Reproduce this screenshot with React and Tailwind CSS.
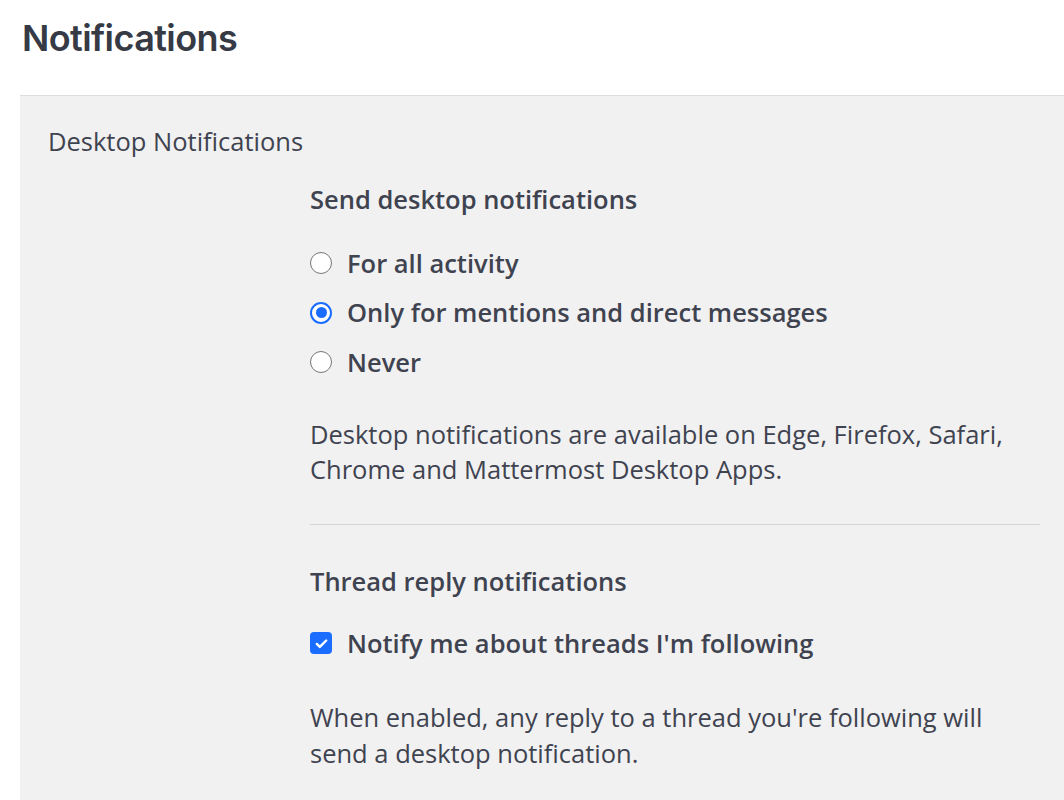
import React, { useState } from "react";

const Radio = ({ checked, label, onSelect }) => (
  <label className="flex items-center h-[36px] cursor-pointer" onClick={onSelect}>
    {checked ? (
      <span className="flex items-center justify-center w-[22px] h-[22px] rounded-full border-[2px] border-[#1a6dff] bg-white">
        <span className="w-[11px] h-[11px] rounded-full bg-[#1a6dff]" />
      </span>
    ) : (
      <span className="w-[22px] h-[22px] rounded-full border-[1.5px] border-[#767676] bg-white" />
    )}
    <span className="ml-[15px] font-semibold">{label}</span>
  </label>
);

const Checkbox = ({ checked, label, onToggle }) => (
  <label className="flex items-center h-[36px] cursor-pointer" onClick={onToggle}>
    {checked ? (
      <span className="flex items-center justify-center w-[22px] h-[22px] rounded-[4px] bg-[#1a6dff]">
        <svg width="15" height="15" viewBox="0 0 16 16">
          <path d="M3 8.5l3.2 3.2L13 4.8" fill="none" stroke="white" strokeWidth="2.6" strokeLinecap="round" strokeLinejoin="round" />
        </svg>
      </span>
    ) : (
      <span className="w-[22px] h-[22px] rounded-[4px] border-[1.5px] border-[#767676] bg-white" />
    )}
    <span className="ml-[15px] font-semibold">{label}</span>
  </label>
);

const options = [
  { value: "all", label: "For all activity" },
  { value: "mention", label: "Only for mentions and direct messages" },
  { value: "never", label: "Never" },
];

export default function App() {
  const [desktop, setDesktop] = useState("mention");
  const [threads, setThreads] = useState(true);

  return (
    <div className="w-[1064px] h-[800px] overflow-hidden bg-white text-[#3f4350] font-['Open_Sans',sans-serif]">
      <h1 className="pl-[22px] pt-[14px] h-[95px] text-[36px] leading-[48px] font-semibold tracking-[-0.6px] text-[#363a45] font-['Inter',sans-serif]">
        Notifications
      </h1>
      <div className="ml-[20px] h-[705px] border-t border-[#dddddd] bg-[#f1f1f1] pl-[28px] pr-[24px] pt-[27px] text-[25.5px]">
        <div className="leading-[36px]">Desktop Notifications</div>
        <div className="ml-[262px] mt-[22px]">
          <div className="leading-[36px] font-semibold">Send desktop notifications</div>
          <div className="mt-[28px] flex flex-col gap-[13.5px]">
            {options.map((o) => (
              <Radio
                key={o.value}
                label={o.label}
                checked={desktop === o.value}
                onSelect={() => setDesktop(o.value)}
              />
            ))}
          </div>
          <p className="mt-[37px] leading-[35px]">
            Desktop notifications are available on Edge, Firefox, Safari,
            <br />
            Chrome and Mattermost Desktop Apps.
          </p>
          <div className="mt-[37px] border-t border-[#d4d4d6]" />
          <div className="mt-[38px] leading-[36px] font-semibold">Thread reply notifications</div>
          <div className="mt-[26px]">
            <Checkbox
              label="Notify me about threads I'm following"
              checked={threads}
              onToggle={() => setThreads(!threads)}
            />
          </div>
          <p className="mt-[38px] leading-[36px]">
            When enabled, any reply to a thread you're following will
            <br />
            send a desktop notification.
          </p>
        </div>
      </div>
    </div>
  );
}
